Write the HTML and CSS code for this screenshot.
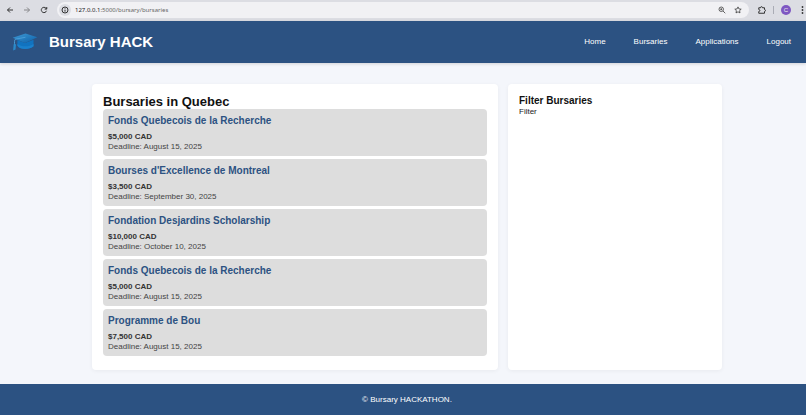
FILE: index.html
```html
<!DOCTYPE html>
<html lang="en">

<head>
    <meta charset="UTF-8">
    <meta name="viewport" content="width=device-width, initial-scale=1.0">
    <title>Bursary HACK</title>
    <link rel="stylesheet" href="styles.css">
</head>

<body>
    <div class="browser-bar">
        <button class="bar-button" aria-label="Back">
            <svg viewBox="0 0 16 16"><path d="M14 8H3M8 3L3 8l5 5" /></svg>
        </button>
        <button class="bar-button disabled" aria-label="Forward">
            <svg viewBox="0 0 16 16"><path d="M2 8h11M8 3l5 5-5 5" /></svg>
        </button>
        <button class="bar-button" aria-label="Reload">
            <svg viewBox="0 0 16 16"><path d="M13 9.500A5.300 5.300 0 1 1 11.800 4.300L13.500 6M13.500 2v4.200H9.300" /></svg>
        </button>
        <div class="address">
            <button class="site-info" aria-label="Site information">
                <svg viewBox="0 0 16 16"><circle cx="8" cy="8" r="6" /><path d="M8 7.300v4M8 4.500v1.300" /></svg>
            </button>
            <a class="url" href="#"><span class="host">127.0.0.1</span>:5000/bursary/bursaries</a>
            <button class="bar-button thin" aria-label="Zoom">
                <svg viewBox="0 0 16 16"><circle cx="6.500" cy="6.500" r="4.500" /><path d="M10 10l4.500 4.500M4.500 6.500h4M6.500 4.500v4" /></svg>
            </button>
            <button class="bar-button thin" aria-label="Bookmark">
                <svg viewBox="0 0 16 16"><path d="M8 1.800l1.900 4.100 4.500.5-3.300 3 .9 4.400L8 11.600l-4 2.200.9-4.400-3.300-3 4.500-.5z" /></svg>
            </button>
        </div>
        <div class="tools">
            <button class="bar-button" aria-label="Extensions">
                <svg viewBox="0 0 16 16"><path d="M1.500 3.500H5c0-3 4-3 4 0h4V7c2.500 0 2.500 4 0 4v3.500H1.500V11c3 0 3-4 0-4z" /></svg>
            </button>
            <span class="divider"></span>
            <button class="avatar" aria-label="Profile">C</button>
            <button class="bar-button" aria-label="Menu">
                <svg class="dots" viewBox="0 0 16 16"><circle cx="9" cy="2" r="1.800" /><circle cx="9" cy="8" r="1.800" /><circle cx="9" cy="14" r="1.800" /></svg>
            </button>
        </div>
    </div>

    <header>
        <div class="brand">
            <svg class="logo" viewBox="0 0 54 38" aria-hidden="true">
                <defs>
                    <linearGradient id="cap" x1="0" y1="0" x2="1" y2="1">
                        <stop offset="0" stop-color="#3f9bd6" />
                        <stop offset="1" stop-color="#0c5fa8" />
                    </linearGradient>
                </defs>
                <path fill="#1173c0" d="M11 15v12c6 9 25 9 34 1V14L27 21z" />
                <path fill="#1a80cc" d="M11 23c8 6 24 7 34 0v5c-9 8-28 8-34-1z" />
                <path fill="url(#cap)" d="M1 10L28 1l25 8-26 12z" />
                <path fill="none" stroke="#4a9fd8" stroke-width="2" d="M28 9L7 13c-3 2-2 7-2 13" />
                <path fill="#2a8acb" d="M3 24h5l-1 11-5 2z" />
            </svg>
            <h1>Bursary HACK</h1>
        </div>
        <nav>
            <a href="#">Home</a>
            <a href="#">Bursaries</a>
            <a href="#">Applications</a>
            <a href="#">Logout</a>
        </nav>
    </header>

    <main>
        <section class="card">
            <h2>Bursaries in Quebec</h2>
            <ul class="bursary-list">
                <li class="bursary">
                    <h3>Fonds Quebecois de la Recherche</h3>
                    <p class="amount">$5,000 CAD</p>
                    <p>Deadline: August 15, 2025</p>
                </li>
                <li class="bursary">
                    <h3>Bourses d'Excellence de Montreal</h3>
                    <p class="amount">$3,500 CAD</p>
                    <p>Deadline: September 30, 2025</p>
                </li>
                <li class="bursary">
                    <h3>Fondation Desjardins Scholarship</h3>
                    <p class="amount">$10,000 CAD</p>
                    <p>Deadline: October 10, 2025</p>
                </li>
                <li class="bursary">
                    <h3>Fonds Quebecois de la Recherche</h3>
                    <p class="amount">$5,000 CAD</p>
                    <p>Deadline: August 15, 2025</p>
                </li>
                <li class="bursary">
                    <h3>Programme de Bou</h3>
                    <p class="amount">$7,500 CAD</p>
                    <p>Deadline: August 15, 2025</p>
                </li>
            </ul>
        </section>

        <aside class="card">
            <h4>Filter Bursaries</h4>
            <p>Filter</p>
        </aside>
    </main>

    <footer>
        <p>&copy; Bursary HACKATHON.</p>
    </footer>
</body>

</html>
```

FILE: styles.css
```css
* {
    margin: 0;
    padding: 0;
    box-sizing: border-box;
}

body {
    display: flex;
    flex-direction: column;
    min-height: 100vh;
    font-family: "Liberation Sans", Arial, sans-serif;
    font-size: 8px;
    line-height: 10px;
    color: #222;
    background-color: #f4f6fb;
}

button {
    border: none;
    background: none;
    font: inherit;
}

a {
    color: inherit;
    text-decoration: none;
}

/* Browser bar */
.browser-bar {
    display: flex;
    align-items: center;
    gap: 9px;
    height: 21px;
    padding: 0 0 1px 6px;
    background-color: #dcdde3;
}

.bar-button {
    flex: none;
    width: 8px;
    height: 8px;
}

.browser-bar svg {
    display: block;
    width: 100%;
    height: 100%;
    fill: none;
    stroke: #333;
    stroke-width: 2;
}

.browser-bar .dots {
    fill: #333;
    stroke: none;
}

.disabled {
    opacity: 0.5;
}

.browser-bar .thin svg {
    stroke-width: 1.5;
}

.address {
    flex: 1;
    display: flex;
    align-items: center;
    gap: 8px;
    height: 16px;
    padding: 0 7px 0 2px;
    border-radius: 8px;
    background-color: #f1f1f4;
}

.site-info {
    width: 12px;
    height: 12px;
    padding: 2px;
    border-radius: 50%;
    background-color: #dcdde3;
}

.url {
    flex: 1;
    margin-left: -4px;
    font-family: "Noto Sans", sans-serif;
    font-size: 6px;
    color: #666;
}

.host {
    color: #222;
}

.tools {
    display: flex;
    align-items: center;
    gap: 7px;
}

.divider {
    width: 1px;
    height: 8px;
    background-color: #aaacb5;
}

.avatar {
    width: 10px;
    height: 10px;
    border-radius: 50%;
    background-color: #7e57c2;
    color: #eee;
    font-size: 6px;
    line-height: 10px;
}

/* Header */
header {
    display: flex;
    justify-content: space-between;
    align-items: center;
    height: 42px;
    padding: 0 15px 0 12px;
    background-color: #2c5282;
    color: white;
    box-shadow: 0 1px 3px rgba(0, 0, 0, 0.15);
}

.brand {
    display: flex;
    align-items: center;
    gap: 11px;
}

.logo {
    width: 26px;
    height: 18px;
}

h1 {
    font-size: 15px;
    line-height: 18px;
}

nav {
    display: flex;
    gap: 28px;
}

/* Content */
main {
    flex: 1;
    display: grid;
    grid-template-columns: 406fr 214fr;
    gap: 10px;
    width: 100%;
    max-width: 638px;
    margin: 0 auto;
    padding: 21px 0 14px 8px;
}

.card {
    padding: 10px 11px 13px;
    border-radius: 4px;
    background-color: white;
    box-shadow: 0 1px 4px rgba(0, 0, 0, 0.05);
}

h2 {
    font-size: 13px;
    line-height: 15px;
    color: #111;
}

h3 {
    margin-bottom: 5px;
    font-size: 10px;
    line-height: 12px;
    color: #2c5282;
}

h4 {
    font-size: 10px;
    line-height: 13px;
    color: #111;
}

.bursary-list {
    display: grid;
    gap: 3px;
    list-style: none;
}

.bursary {
    padding: 6px 5px 4px;
    border-radius: 4px;
    background-color: #ddd;
    color: #444;
}

.amount {
    font-weight: bold;
    color: #333;
}

/* Footer */
footer {
    padding: 11px 0 10px 8px;
    background-color: #2c5282;
    color: white;
    text-align: center;
}
```
